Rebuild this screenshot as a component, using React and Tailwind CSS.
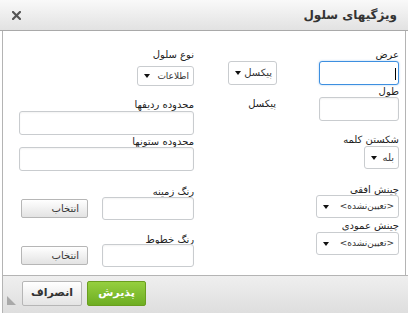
const font = { fontFamily: '"DejaVu Sans", Tahoma, sans-serif' };

const Arrow = () => (
  <svg width="6" height="4" viewBox="0 0 6 4" className="shrink-0">
    <path d="M0 0h6L3 4z" fill="#111" />
  </svg>
);

const Select = ({ className, text, small }) => (
  <div className={`flex items-center justify-between gap-[3px] border border-[#c9cccf] rounded-[3px] bg-white pr-[4px] pl-[6px] ${className}`}>
    <span className={`${small ? 'text-[9px]' : 'text-[10px]'} text-[#333] whitespace-nowrap leading-none`}>{text}</span>
    <Arrow />
  </div>
);

const Input = ({ className = '' }) => (
  <div className={`border border-[#c9cccf] rounded-[3px] bg-white shadow-[inset_0_1px_2px_rgba(0,0,0,0.05)] ${className}`} />
);

const Label = ({ children, className = '' }) => (
  <div className={`text-[10px] leading-[12px] text-[#222] whitespace-nowrap ${className}`}>{children}</div>
);

const PickButton = () => (
  <div className="w-[67px] h-[19px] ml-[2px] border border-[#b6b6b6] rounded-[2px] bg-gradient-to-b from-white to-[#e3e3e3] flex items-center pr-[8px] text-[10px] text-[#333]">
    انتخاب
  </div>
);

export default function App() {
  return (
    <div className="w-[408px] h-[313px] bg-white flex flex-col overflow-hidden" style={font}>
      {/* Title bar */}
      <div className="h-[31px] shrink-0 flex items-center justify-between pl-[12px] pr-[11px] bg-gradient-to-b from-[#f9f9f9] to-[#e2e2e2] border-b border-[#a9a9a9]">
        <svg width="9" height="9" viewBox="0 0 9 9">
          <path d="M1 1l7 7M8 1L1 8" stroke="#555" strokeWidth="2.2" strokeLinecap="square" />
        </svg>
        <div dir="rtl" className="text-[12px] font-bold text-[#333]">ویژگیهای سلول</div>
      </div>

      {/* Body */}
      <div dir="rtl" className="flex-1 ml-[2px] mr-[2px] border-x border-[#b4b4b4] flex justify-between pt-[18px] pr-[6px] pl-[16px]">
        {/* right side */}
        <div className="w-[171px] flex flex-col">
          <Label>عرض</Label>
          <div className="flex items-start gap-[42px]">
            <div className="relative w-[80px] h-[24px] border border-[#3d8fe0] rounded-[3px] bg-white shadow-[0_0_2px_rgba(61,143,224,0.5)]">
              <div className="absolute right-[2px] top-[6px] w-[1px] h-[12px] bg-black" />
            </div>
            <Select className="w-[49px] h-[24px]" text="پیکسل" />
          </div>
          <Label className="mt-[1px] h-[11px]">طول</Label>
          <div className="flex items-start gap-[42px]">
            <Input className="w-[80px] h-[24px]" />
            <span className="w-[49px] pt-[1px] pr-[1px] text-[10px] leading-[12px] text-[#222]">پیکسل</span>
          </div>
          <Label className="mt-[13px]">شکستن کلمه</Label>
          <Select className="w-[35px] h-[23px]" text="بله" />
          <Label className="mt-[15px] h-[11px]">چینش افقی</Label>
          <Select className="w-[83px] h-[23px]" text="<تعیین‌نشده>" small />
          <Label className="mt-[2px]">چینش عمودی</Label>
          <Select className="w-[83px] h-[23px]" text="<تعیین‌نشده>" small />
        </div>

        {/* left side */}
        <div className="w-[175px] flex flex-col">
          <Label>نوع سلول</Label>
          <Select className="mt-[5px] w-[57px] h-[20px]" text="اطلاعات" small />
          <Label className="mt-[13px]">محدوده ردیفها</Label>
          <Input className="w-full h-[24px]" />
          <Label className="mt-[1px] h-[11px]">محدوده ستونها</Label>
          <Input className="w-full h-[24px]" />
          <Label className="mt-[15px] h-[11px]">رنگ زمینه</Label>
          <div className="flex items-center justify-between">
            <Input className="w-[92px] h-[23px]" />
            <PickButton />
          </div>
          <Label className="mt-[14px] h-[11px]">رنگ خطوط</Label>
          <div className="flex items-center justify-between -mt-[1px]">
            <Input className="w-[92px] h-[23px]" />
            <PickButton />
          </div>
        </div>
      </div>

      {/* Footer */}
      <div className="relative h-[38px] shrink-0 ml-[2px] border-l border-t border-[#b4b4b4] bg-gradient-to-b from-[#efefef] to-[#dedede] flex items-start gap-[5px] pt-[5px] pl-[19px]">
        <div className="w-[60px] h-[25px] border border-[#b6b6b6] rounded-[2px] bg-gradient-to-b from-white to-[#e4e4e4] flex items-center justify-center text-[11px] font-bold text-[#333]">
          انصراف
        </div>
        <div className="w-[59px] h-[25px] border border-[#6a9e1f] rounded-[2px] bg-gradient-to-b from-[#95cf3f] to-[#6eae22] flex items-center justify-center text-[11px] font-bold text-white">
          پذیرش
        </div>
        <svg className="absolute left-[4px] bottom-[8px]" width="9" height="9" viewBox="0 0 9 9">
          <path d="M0 0L9 9H0z" fill="#a9a9a9" />
        </svg>
      </div>
    </div>
  );
}
